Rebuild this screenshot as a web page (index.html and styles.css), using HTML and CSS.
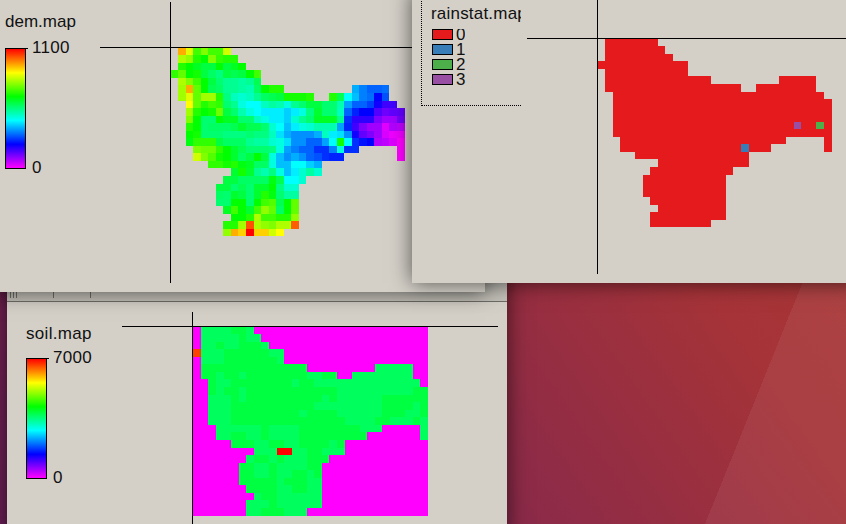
FILE: index.html
```html
<!DOCTYPE html>
<html lang="en">
<head>
  <meta charset="UTF-8">
  <title>Map displays</title>
  <link rel="stylesheet" href="styles.css">
</head>
<body>
  <div class="desktop">

    <!-- soil.map, lowest window -->
    <section class="window window-soil">
      <div class="toolbar">
        <span class="tick"></span><span class="tick tick-near"></span><span class="tick tick-near"></span>
        <span class="tick tick-far"></span><span class="tick tick-far"></span>
      </div>
      <div class="window-body">
        <div class="legend legend-soil">
          <div class="map-title">soil.map</div>
          <div class="scale">
            <div class="scale-bar"></div>
            <div class="scale-labels"><span>7000</span><span>0</span></div>
          </div>
        </div>
        <div class="plot plot-soil" id="soilPlot">
          <i class="axis-h"></i><i class="axis-v"></i>
        </div>
      </div>
    </section>

    <!-- dem.map -->
    <section class="window window-dem">
      <div class="window-body">
        <div class="legend legend-dem">
          <div class="map-title">dem.map</div>
          <div class="scale">
            <div class="scale-bar"></div>
            <div class="scale-labels"><span>1100</span><span>0</span></div>
          </div>
        </div>
        <div class="plot plot-dem" id="demPlot">
          <i class="axis-h"></i><i class="axis-v"></i>
        </div>
      </div>
    </section>

    <!-- rainstat.map, on top -->
    <section class="window window-rain">
      <div class="window-body">
        <div class="legend-box">
          <div class="map-title">rainstat.map</div>
          <div class="class-list">
            <div class="class-row"><span class="swatch swatch-0"></span><span class="class-label">0</span></div>
            <div class="class-row"><span class="swatch swatch-1"></span><span class="class-label">1</span></div>
            <div class="class-row"><span class="swatch swatch-2"></span><span class="class-label">2</span></div>
            <div class="class-row"><span class="swatch swatch-3"></span><span class="class-label">3</span></div>
          </div>
        </div>
        <div class="plot plot-rain" id="rainPlot">
          <i class="axis-h"></i><i class="axis-v"></i>
        </div>
      </div>
    </section>

  </div>
  <script src="maps.js"></script>
</body>
</html>
```

FILE: styles.css
```css
* {
  box-sizing: border-box;
}

html, body {
  margin: 0;
  padding: 0;
  height: 100%;
  overflow: hidden;
}

.desktop {
  position: relative;
  width: 846px;
  height: 524px;
  overflow: hidden;
  background:
    linear-gradient(112deg, transparent 850px, rgba(255, 255, 255, 0.06) 850px),
    linear-gradient(55deg, #6c1f58 0%, #8a2a4a 42%, #a53338 72%, #ad3a34 100%);
  font-family: "Liberation Sans", Arial, sans-serif;
  font-size: 17px;
  line-height: 20px;
  color: #111;
}

/* windows sit freely on the desktop */
.window {
  position: absolute;
  background-color: #d4d0c8;
  box-shadow: 0 0 20px rgba(0, 0, 0, 0.62);
}

.window-soil {
  left: 7px;
  top: 270px;
  width: 500px;
  height: 270px;
  z-index: 1;
}

.window-dem {
  left: -10px;
  top: -10px;
  width: 495px;
  height: 302px;
  z-index: 2;
  padding: 10px 0 0 10px;
}

.window-rain {
  left: 412px;
  top: -10px;
  width: 450px;
  height: 293px;
  z-index: 3;
  padding-top: 10px;
}

.window-body {
  display: flex;
  align-items: flex-start;
}

.toolbar {
  display: flex;
  align-items: flex-end;
  height: 32px;
  padding: 0 0 3px 3px;
  border-bottom: 1px solid #6f6d67;
  background-color: #c4c1b9;
}

.tick {
  width: 1px;
  height: 7px;
  background-color: #6f6d67;
}

.tick-near {
  margin-left: 2px;
}

.tick-far {
  margin-left: 36px;
}

.legend-dem {
  flex: 0 0 171px;
  padding: 12px 0 0 5px;
}

.legend-soil {
  flex: 0 0 186px;
  padding: 22px 0 0 19px;
}

.map-title {
  white-space: nowrap;
}

.legend-dem .map-title {
  margin-bottom: 16px;
}

.legend-soil .map-title {
  margin-bottom: 14px;
  letter-spacing: 0.3px;
}

.legend-box .map-title {
  letter-spacing: 0.2px;
}

.scale {
  display: flex;
  gap: 6px;
}

.scale-bar {
  position: relative;
  width: 21px;
  height: 121px;
  border: 1px solid #000;
  background: linear-gradient(#ff0000, #ffff00 20%, #00ff00 40%, #00ffff 60%, #0000ff 80%, #ff00ff);
}

.scale-bar::after {
  content: "";
  position: absolute;
  left: 19px;
  top: -1px;
  width: 3px;
  height: 1px;
  background-color: #000;
}

.scale-labels {
  display: flex;
  flex-direction: column;
  justify-content: space-between;
  margin: -10px 0 -9px 0;
  letter-spacing: 0.3px;
}

.plot {
  position: relative;
  flex: none;
}

.plot svg {
  display: block;
}

.plot-dem {
  margin-top: 48px;
  width: 234px;
  height: 189px;
}

.plot-soil {
  margin-top: 25px;
  width: 236px;
  height: 189px;
}

.plot-rain {
  margin: 39px 0 0 77px;
  width: 234px;
  height: 189px;
}

/* crosshair drawn over the map */
.axis-h,
.axis-v {
  position: absolute;
  background-color: #000;
  z-index: 1;
}

.axis-h {
  height: 1px;
  top: -1px;
}

.axis-v {
  width: 1px;
  left: -1px;
}

.plot-dem .axis-h {
  left: -71px;
  width: 330px;
}

.plot-dem .axis-v {
  top: -46px;
  height: 281px;
}

.plot-soil .axis-h {
  left: -71px;
  width: 376px;
}

.plot-soil .axis-v {
  top: -15px;
  height: 220px;
}

.plot-rain .axis-h {
  left: -71px;
  width: 330px;
}

.plot-rain .axis-v {
  top: -39px;
  height: 274px;
}

.legend-box {
  flex: none;
  width: 100px;
  height: 111px;
  margin: -5px 0 0 9px;
  padding: 9px 0 0 9px;
  border-left: 1px dotted #000;
  border-bottom: 1px dotted #000;
  overflow: hidden;
}

.class-list {
  display: flex;
  flex-direction: column;
  gap: 4px;
  margin-top: 5px;
  margin-left: 1px;
}

.class-row {
  display: flex;
  gap: 3px;
  height: 11px;
}

.swatch {
  width: 21px;
  height: 11px;
  border: 1px solid #000;
}

.swatch-0 { background-color: #e41a1c; }
.swatch-1 { background-color: #377eb8; }
.swatch-2 { background-color: #4daf4a; }
.swatch-3 { background-color: #984ea3; }

.class-label {
  line-height: 11px;
}

.class-row:first-child .class-label {
  height: 11px;
  overflow: hidden;
}
```

FILE: maps.js
```js
const _ = null;
const COLS = 31;
const ROWS = 25;
// cells in the reference round down, not to nearest
const NUDGE = 0.06;

// dem.map hues per cell, each row starts with its first column
const demRows = [
  [1, 41, 67, 105, 90, 105, 105, 71],
  [1, 79, 86, 112, 120, 90, 108, 112, 112],
  [1, 112, 120, 128, 135, 135, 120, 135, 128, 120],
  [0, 109, 97, 120, 116, 135, 143, 150, 135, 139, 135, 120, 105],
  [1, 79, 90, 105, 120, 135, 146, 154, 154, 158, 154, 139],
  [1, 82, 41, 97, 120, 139, 143, 154, 154, 158, 161, 143, 120, 112, 112, _, _, _, _, _, _, _, _, _, 199, 210, 217, 217, 214],
  [1, 82, 67, 97, 82, 82, 112, 150, 165, 169, 165, 154, 143, 139, 135, 116, 116, 116, 112, _, _, 112, 139, 180, 195, 210, 214, 240, 221],
  [2, 60, 97, 112, 105, 109, 146, 154, 173, 180, 180, 165, 158, 161, 173, 154, 146, 135, 135, 146, 146, 161, 202, 217, 217, 225, 244, 255, 255],
  [2, 82, 112, 120, 116, 94, 135, 146, 161, 173, 180, 184, 184, 184, 191, 184, 173, 150, 131, 146, 146, 165, 217, 232, 240, 240, 259, 266, 263, 263],
  [2, 90, 120, 146, 146, 120, 128, 128, 146, 146, 165, 173, 184, 184, 191, 169, 154, 146, 128, 128, 128, 154, 229, 251, 251, 251, 270, 278, 278, 267],
  [2, 112, 120, 146, 143, 143, 143, 139, 131, 139, 139, 146, 169, 180, 195, 184, 173, 169, 161, 161, 161, 202, 232, 255, 270, 278, 278, 293, 282, 285],
  [2, 120, 116, 146, 146, 146, 150, 150, 150, 146, 150, 150, 165, 187, 199, 206, 206, 206, 199, 165, 184, 187, 206, 244, 263, 270, 278, 291, 296, 296],
  [2, 124, 109, 109, 109, 135, 143, 143, 143, 154, 158, 158, 169, 173, 187, 206, 206, 217, 217, 202, 180, 116, 180, 229, 236, 240, 282, 285, 292, 300],
  [3, 90, 94, 94, 109, 120, 131, 139, 146, 146, 146, 150, 173, 202, 210, 217, 217, 229, 229, 210, 173, 229, 229, _, _, _, _, _, 300],
  [3, 71, 90, 101, 116, 120, 131, 143, 135, 120, 135, 173, 195, 206, 199, 206, 217, 221, 229, 232, 232, _, _, _, _, _, _, _, 300],
  [5, 109, 109, 116, 112, 124, 128, 143, 143, 173, 195, 195, 180, 180, 191, 199],
  [8, 131, 116, 131, 154, 161, 150, 173, 195, 184, 169, 158, 169],
  [7, 135, 135, 143, 143, 143, 143, 124, 139, 180, 180, 169],
  [6, 135, 135, 146, 139, 146, 131, 131, 120, 150, 169, 169],
  [6, 143, 146, 131, 135, 146, 131, 112, 124, 146, 158, 158],
  [6, 146, 146, 120, 120, 146, 120, 105, 101, 139, 120, 97],
  [7, 128, 105, 120, 131, 105, 86, 97, 143, 120, 97],
  [8, 120, 120, 112, 79, 105, 105, 112, 112, 86],
  [7, 112, 112, 82, 19, 79, 86, 90, 79, 79, 22],
  [7, 86, 41, 49, 0, 49, 49, 71, 60]
];

// soil.map classes, one char per cell
const soilRows = [
  ".bbbbaab",
  ".bbbbbabb",
  ".bbabbaaab",
  "obbbaaaaaabb",
  ".bbbaaaaaaab",
  ".aaaaaaaaaaaaaa.........bbbbb",
  ".aabaabaaaaaaaabbaa..bbbbbbbb",
  "..abbaaaaaaaabaabbbbbbbbbbbbbb",
  "..abaabaaaaaaaaaaaabbbbbbbbbbaa",
  "..bbbabaaaaaaaaaababbbbbbaaaaaa",
  "..bbbaaaaaaaaaaabbbbbbbbbaaaaba",
  "..bbbaaaaaaaaabaaaabbbbbbaaabba",
  "..bbbaaaaaaaaaaaaaaabbbbaabbbab",
  "...bbbbbbabbbbaaaaaaaabbb.....b",
  "...bbaabbabbbbaaaaaaaaa.......b",
  ".....aaabbaabbaaaaba",
  "........bbbrrbbaabbb",
  ".......baababbbaaa",
  "......aabbabbbbaa",
  "......aabbabbaaba",
  "......aaaaabaaabb",
  ".......aaaabbaabb",
  "........baabbbbbb",
  ".......bbbabbbbbb",
  ".......bbaaabbb"
];

const SOIL_COLORS = { ".": "#ff00ff", a: "#00ff40", b: "#00ff5c", o: "#ff4000", r: "#ff0000" };

// rainstat.map is one class except for the gauge cells
const rainCells = { "14,19": "#377eb8", "11,26": "#984ea3", "11,29": "#4daf4a" };

function hueAt(row, col) {
  const values = demRows[row];
  const hue = values[col - values[0] + 1];
  return hue === undefined || col < values[0] ? null : hue;
}

function demColor(row, col) {
  const hue = hueAt(row, col);
  return hue === null ? null : `hsl(${hue}, 100%, 50%)`;
}

function soilColor(row, col) {
  return SOIL_COLORS[soilRows[row][col] || "."];
}

function rainColor(row, col) {
  if (hueAt(row, col) === null) return null;
  return rainCells[row + "," + col] || "#e41a1c";
}

function drawMap(plotId, colorAt) {
  const plot = document.getElementById(plotId);
  const ns = "http://www.w3.org/2000/svg";
  const svg = document.createElementNS(ns, "svg");
  svg.setAttribute("viewBox", `${NUDGE} ${NUDGE} ${COLS} ${ROWS}`);
  svg.setAttribute("width", plot.offsetWidth);
  svg.setAttribute("height", plot.offsetHeight);
  svg.setAttribute("shape-rendering", "crispEdges");

  for (let row = 0; row < ROWS; row++) {
    for (let col = 0; col < COLS; col++) {
      const color = colorAt(row, col);
      if (!color) continue;
      const cell = document.createElementNS(ns, "rect");
      cell.setAttribute("x", col);
      cell.setAttribute("y", row);
      cell.setAttribute("width", 1);
      cell.setAttribute("height", 1);
      cell.setAttribute("fill", color);
      svg.appendChild(cell);
    }
  }
  plot.appendChild(svg);
}

drawMap("demPlot", demColor);
drawMap("soilPlot", soilColor);
drawMap("rainPlot", rainColor);
```
